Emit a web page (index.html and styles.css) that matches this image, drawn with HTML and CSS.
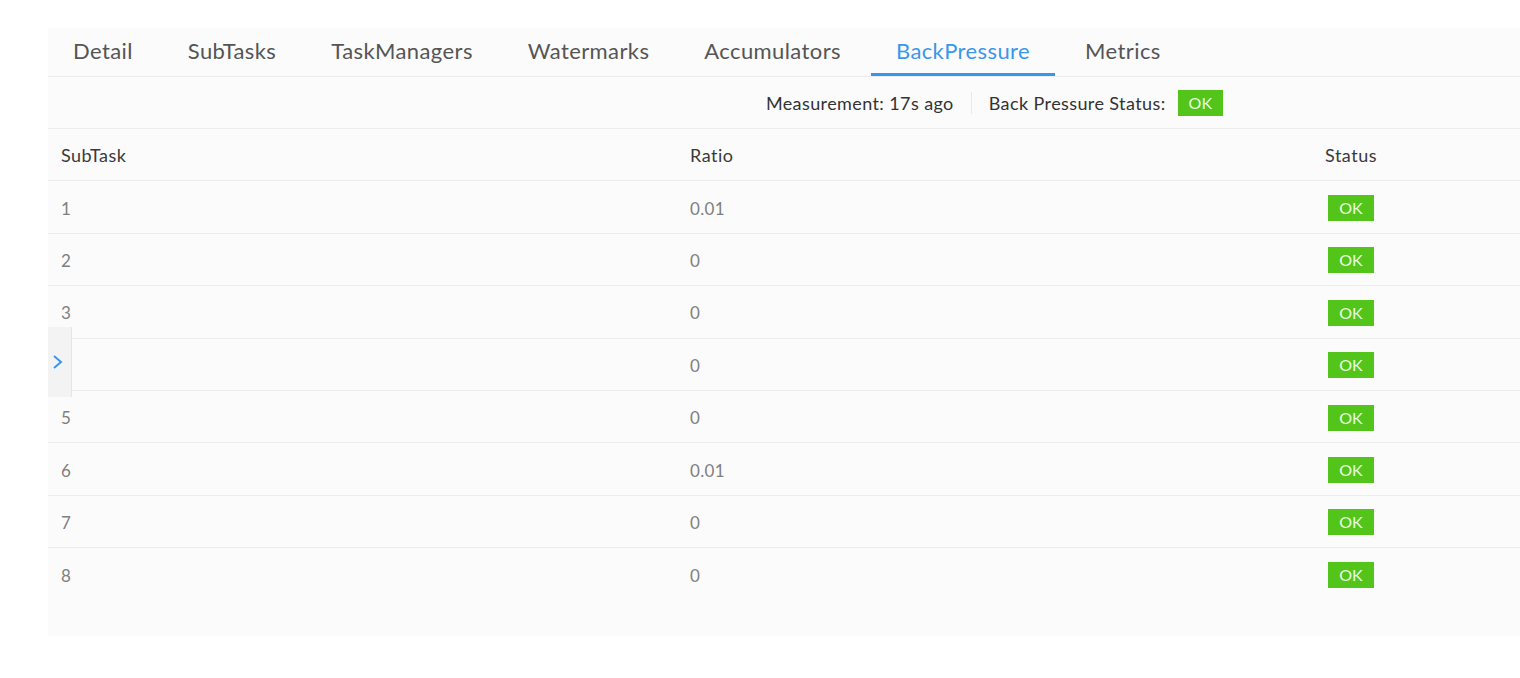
FILE: index.html
```html
<!DOCTYPE html>
<html>
<head>
<meta charset="utf-8">
<link rel="stylesheet" href="styles.css">
</head>
<body>
<div class="page">
  <div class="panel">
    <nav class="tabs">
      <div class="tab">Detail</div>
      <div class="tab">SubTasks</div>
      <div class="tab">TaskManagers</div>
      <div class="tab">Watermarks</div>
      <div class="tab">Accumulators</div>
      <div class="tab active">BackPressure</div>
      <div class="tab">Metrics</div>
    </nav>
    <div class="statusbar">
      <span class="measure">Measurement: 17s ago</span>
      <span class="divider"></span>
      <span class="bps">Back Pressure Status:</span>
      <span class="badge">OK</span>
    </div>
    <div class="table">
      <div class="row head">
        <div class="c1">SubTask</div><div class="c2">Ratio</div><div class="c3">Status</div>
      </div>
      <div class="row"><div class="c1">1</div><div class="c2">0.01</div><div class="c3"><span class="badge">OK</span></div></div>
      <div class="row"><div class="c1">2</div><div class="c2">0</div><div class="c3"><span class="badge">OK</span></div></div>
      <div class="row"><div class="c1">3</div><div class="c2">0</div><div class="c3"><span class="badge">OK</span></div></div>
      <div class="row"><div class="c1">4</div><div class="c2">0</div><div class="c3"><span class="badge">OK</span></div></div>
      <div class="row"><div class="c1">5</div><div class="c2">0</div><div class="c3"><span class="badge">OK</span></div></div>
      <div class="row"><div class="c1">6</div><div class="c2">0.01</div><div class="c3"><span class="badge">OK</span></div></div>
      <div class="row"><div class="c1">7</div><div class="c2">0</div><div class="c3"><span class="badge">OK</span></div></div>
      <div class="row last"><div class="c1">8</div><div class="c2">0</div><div class="c3"><span class="badge">OK</span></div></div>
    </div>
    <div class="collapse">
      <svg width="12" height="16" viewBox="0 0 12 16"><path d="M2 2 L9 8 L2 14" fill="none" stroke="#3a96ec" stroke-width="2"/></svg>
    </div>
  </div>
</div>
</body>
</html>
```
FILE: styles.css
```css
html, body {
  margin: 0;
  padding: 0;
  background: #ffffff;
  font-family: Lato, "Noto Sans", sans-serif;
}
.page {
  padding: 28px 0 0 48px;
  height: 650px;
}
.panel {
  position: relative;
  background: #fbfbfb;
  height: 608px;
}
.tabs {
  display: flex;
  gap: 5px;
  height: 48px;
  border-bottom: 1px solid #ececec;
}
.tab {
  padding: 0 25px;
  font-size: 22px;
  letter-spacing: 0.4px;
  color: #555;
  line-height: 46px;
  border-bottom: 3px solid transparent;
}
.tab.active {
  color: #3a96ec;
  border-bottom-color: #3a96ec;
}
.statusbar {
  display: flex;
  align-items: center;
  justify-content: flex-end;
  height: 51px;
  padding-right: 297px;
  border-bottom: 1px solid #ececec;
  font-size: 18px;
  letter-spacing: 0.4px;
  color: #333;
}
.divider {
  width: 1px;
  height: 22px;
  background: #e8e8e8;
  margin: 0 17px;
}
.bps { margin-right: 12px; }
.badge {
  display: inline-block;
  background: #52c41a;
  color: #eaffe0;
  font-size: 16px;
  letter-spacing: 0;
  line-height: 26px;
  height: 26px;
  padding: 0 11px;
}
.row {
  display: grid;
  grid-template-columns: 629px 505px 1fr;
  height: 51.4px;
  box-sizing: border-box;
  padding-top: 2px;
  align-items: center;
  border-bottom: 1px solid #ececec;
  font-size: 17px;
  letter-spacing: 0.3px;
  color: #808080;
}
.row:not(.head) { height: 52.4px; }
.row.head { height: 52.4px; padding-top: 0; color: #3a3a3a; font-size: 18px; letter-spacing: 0.5px; }
.row.last { border-bottom: none; }
.c1, .c2 { padding-left: 13px; }
.c3 { text-align: center; }
.collapse {
  position: absolute;
  left: 0;
  top: 299px;
  width: 24px;
  height: 70px;
  background: #f3f3f3;
  border-right: 1px solid #e6e6e6;
  display: flex;
  align-items: center;
  justify-content: flex-start;
  padding-left: 4px;
  box-sizing: border-box;
}
```
